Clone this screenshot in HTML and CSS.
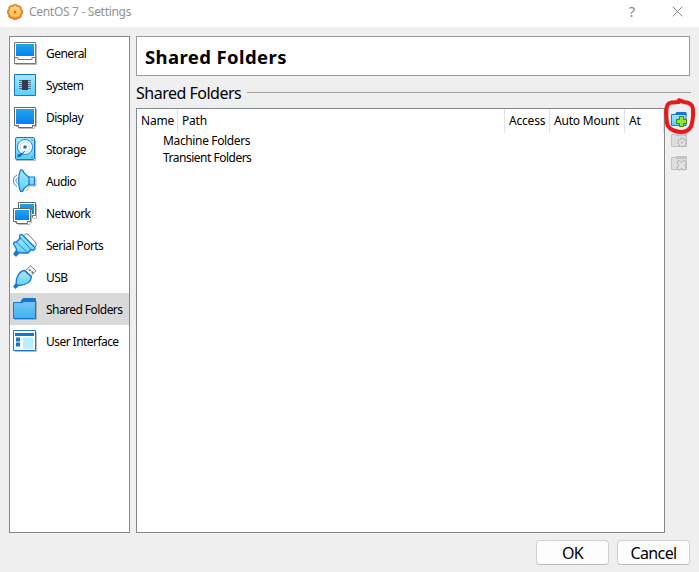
FILE: index.html
```html
<!DOCTYPE html>
<html lang="en">
<head>
<meta charset="utf-8">
<title>CentOS 7 - Settings</title>
<link rel="stylesheet" href="styles.css">
</head>
<body>
<svg class="defs" width="0" height="0" aria-hidden="true">
  <defs>
    <linearGradient id="blue" x1="0" y1="0" x2="0" y2="1"><stop offset="0" stop-color="#22a5e4"/><stop offset="1" stop-color="#0780f6"/></linearGradient>
    <linearGradient id="sky" x1="0" y1="0" x2="0" y2="1"><stop offset="0" stop-color="#a5e8fd"/><stop offset="1" stop-color="#58d0fc"/></linearGradient>
    <linearGradient id="fold" x1="0" y1="0" x2="0" y2="1"><stop offset="0" stop-color="#7cc5f2"/><stop offset="1" stop-color="#37b4f3"/></linearGradient>
    <linearGradient id="gear" x1="0" y1="0" x2="0" y2="1"><stop offset="0" stop-color="#ffdc78"/><stop offset="1" stop-color="#fba02c"/></linearGradient>
  </defs>
</svg>
<div class="window">
  <header class="titlebar">
    <svg class="app-icon" width="16" height="16" viewBox="0 0 16 16"><path d="M6.500.800h3l.8 1.500 1.900-.4 1.900 1.900-.3 1.900 1.400.8v3l-1.400.8.300 1.900-1.900 1.900-1.900-.4-.8 1.500h-3l-.8-1.500-1.900.4-1.900-1.900.3-1.900L.900 9.500v-3l1.400-.8-.3-1.900 1.900-1.900 1.900.4z" fill="url(#gear)" stroke="#dc6a24" stroke-width="1.300" stroke-linejoin="round"/><circle cx="8" cy="8" r="4" fill="none" stroke="#ffdf8c" stroke-width="1.200"/><circle cx="8" cy="8" r="1.300" fill="#df6b1e"/></svg>
    <span class="title">CentOS 7 - Settings</span>
    <span class="help">?</span>
    <svg class="close" width="11" height="11" viewBox="0 0 11 11"><path d="M.7.7l9.600 9.600M10.300.7L.7 10.300" stroke="#858585" stroke-width="1"/></svg>
  </header>
  <div class="body">
    <nav class="sidebar">
      <div class="item"><svg viewBox="0 0 24 24"><path d="M2.500 23.500h21V3" fill="none" stroke="#b9b9b9"/><path d="M1.500 1.500h21v21h-21z" fill="#fff" stroke="#777"/><path d="M3 3h18v12H3z" fill="url(#blue)"/><path d="M2 16.500h3v2h14v-2h3" fill="none" stroke="#777"/></svg><span>General</span></div>
      <div class="item"><svg viewBox="0 0 24 24"><path d="M1.500 1.500h21v21h-21z" fill="url(#sky)" stroke="#1874cf"/><path d="M6 7.500h12M6 9.500h12M6 11.500h12M6 13.500h12M6 15.500h12" stroke="#477391"/><path d="M9 7h6v10H9z" fill="#383a45"/></svg><span>System</span></div>
      <div class="item"><svg viewBox="0 0 24 24"><path d="M3 21.500h3v2h15v-2h2.500V4" fill="none" stroke="#b9b9b9"/><path d="M1.500 2.500h21v18h-3v2h-14v-2h-4z" fill="#fff" stroke="#666"/><path d="M3 4h18v15H3z" fill="url(#blue)"/></svg><span>Display</span></div>
      <div class="item"><svg viewBox="0 0 24 24"><path d="M3 23.500h19.500V3" fill="none" stroke="#b9b9b9"/><rect x="2.500" y=".5" width="19" height="22" rx="1.500" fill="url(#sky)" stroke="#1874cf"/><circle cx="12" cy="10" r="7.500" fill="#fff" stroke="#2488df"/><circle cx="12" cy="10" r="5" fill="none" stroke="#b8def5"/><circle cx="12" cy="10" r="1.800" fill="#176fc5"/><path d="M13 13l-5 6.500-3.500 1-.2-3L9 16z" fill="#176fc5"/><circle cx="19" cy="3" r=".7" fill="#176fc5"/><circle cx="19" cy="20" r=".7" fill="#176fc5"/></svg><span>Storage</span></div>
      <div class="item"><svg viewBox="0 0 24 24"><path d="M13.500 22l3-5h6.500V9" fill="none" stroke="#b9b9b9"/><path d="M15.500 8h6v8h-6z" fill="url(#sky)" stroke="#1874cf" stroke-width="1.200"/><path d="M7.500 1C9.500.5 10.500 2 11 4l5 4.500v7L11 19.500c-.5 2-1.500 3.500-3.500 3C5 17 5 6.500 7.500 1z" fill="url(#sky)" stroke="#1874cf" stroke-width="1.200"/><path d="M4 6C-.800 8.500-.800 15 4 17.500M4.500 9c-2 1.500-2 4 0 5.500" fill="none" stroke="#2886d8" stroke-width="1"/></svg><span>Audio</span></div>
      <div class="item"><svg viewBox="0 0 24 24"><path d="M20 17.500h3.500V3" fill="none" stroke="#b9b9b9"/><path d="M5.500 1.500h17v13h-3v2h-11v-2h-3z" fill="#fff" stroke="#666"/><path d="M7 3h14v10H7z" fill="url(#blue)"/><path d="M2 21.500h3v2h12v-2h1.500V9" fill="none" stroke="#b9b9b9"/><path d="M.500 7.500h17v13h-3v2h-11v-2h-3z" fill="#fff" stroke="#666"/><path d="M2 9h14v10H2z" fill="url(#blue)"/></svg><span>Network</span></div>
      <div class="item"><svg viewBox="0 0 24 24"><path d="M10 3.500l2.500-2.500H15l8 9v3l-2 2z" fill="#fff" stroke="#777"/><path d="M7 2c1.500-1 3-.5 3.500 1L21 13.500c1.500 1 1.500 2.500 0 3.500-1 .5-2 .3-3-.5l-3 3.500H9l-2.500-.5L3 23l-2-2 2.500-3.500L3 15 .800 11.500c-.5-2 .7-3 2.500-2.500L7.500 5C6.500 4 6.300 3 7 2z" fill="url(#sky)" stroke="#1874cf" stroke-width="1.300" stroke-linejoin="round"/><path d="M7.500 5L18 16.500M3.300 9L15 20" fill="none" stroke="#1f80d6"/><path d="M5 18.500L2 21.500" stroke="#1874cf" stroke-width="2.200"/></svg><span>Serial Ports</span></div>
      <div class="item"><svg viewBox="0 0 24 24"><path d="M12.500 5.500L17.500.800l5.500 5-5 5z" fill="#fff" stroke="#777"/><path d="M16 4.500L17.500 6M18.500 6.500L20 8" stroke="#555" stroke-width="1.500"/><path d="M11.500 5.500l7 6.500c-.5 5-5.500 8-13 8.500l-3 2.500L1 21.500 3 19C3 11.500 6.500 6 11.500 5.500z" fill="url(#sky)" stroke="#1874cf" stroke-width="1.300"/><path d="M4.500 19L2 21.500" stroke="#1874cf" stroke-width="2"/></svg><span>USB</span></div>
      <div class="item selected"><svg viewBox="0 0 24 24"><path d="M1.500 22.500h22V4" fill="none" stroke="#aaa"/><path d="M8 4.500L10 1.500h12.500V7H8z" fill="#1874d2" stroke="#1874d2"/><path d="M.500 21.500v-16H9l2-1h11.500v17z" fill="url(#fold)" stroke="#1874d2"/></svg><span>Shared Folders</span></div>
      <div class="item"><svg viewBox="0 0 24 24"><path d="M1.500 22.500h22V3" fill="none" stroke="#b9b9b9"/><path d="M.500 1.500h22v20H.500z" fill="#f4fcff" stroke="#2079cd"/><path d="M2 4h19v3H2zM3 8.500h4v4H3zM3 13.500h4v4H3z" fill="#1874d2"/><path d="M10 8.500h10v11H10z" fill="#b8edff"/></svg><span>User Interface</span></div>
    </nav>
    <main class="content">
      <h1 class="page-title"><span>Shared Folders</span></h1>
      <div class="group"><span>Shared Folders</span><i></i></div>
      <div class="row">
        <section class="table">
          <div class="head"><span>Name</span><span>Path</span><span>Access</span><span>Auto Mount</span><span>At</span></div>
          <div class="line machine"><span>Machine Folders</span></div>
          <div class="line transient"><span>Transient Folders</span></div>
        </section>
        <aside class="tools">
          <svg class="tool" viewBox="0 0 16 16"><path d="M4 4l1.500-2.500H15V5H4z" fill="#1874d2" stroke="#1874d2"/><path d="M.500 14.500v-11H5l1-1h9v12z" fill="url(#sky)" stroke="#2379cf"/><path d="M5 2h10v2H5z" fill="#1c73cd"/><path d="M8.500 5.500h4v3h3v4h-3v3h-4v-3h-3v-4h3z" fill="#95e629" stroke="#38861b"/></svg>
          <svg class="tool" viewBox="0 0 16 16"><path d="M.500 13.500v-12H4l1.500-1H15.500v13z" fill="#dedede" stroke="#c2c2c2"/><path d="M5 1h10v2H5z" fill="#c3c3c3"/><circle cx="11" cy="9.500" r="4" fill="#e3e3e3" stroke="#b0b0b0" stroke-width="1.300" stroke-dasharray="2 .7"/><circle cx="11" cy="9.500" r="1.100" fill="#b0b0b0"/></svg>
          <svg class="tool" viewBox="0 0 16 16"><path d="M.500 14.500v-12H4l1.500-1H15.500v13z" fill="#dedede" stroke="#c2c2c2"/><path d="M5 2h10v2H5z" fill="#c3c3c3"/><path d="M6 7l2-1.500 2.500 2 2.500-2L15.500 7l-1.800 3.300 1.800 3-2.500 2-2.500-2-2.500 2-2.200-2 2-3z" fill="#e3e3e3" stroke="#b0b0b0"/></svg>
          <svg class="marker" width="34" height="42" viewBox="0 0 34 42"><path d="M16 6C11 6 6 6 4.500 9 2 14 3.500 22 4 27c.5 5 6 8 12 8.800 5 .6 10.500-1 12.500-6.500 1.500-6 2-13 1.200-18C29 8 25 6.500 21 6L16 4.200" fill="none" stroke="#e8191c" stroke-width="4" stroke-linecap="round" stroke-linejoin="round"/></svg>
        </aside>
      </div>
    </main>
  </div>
  <footer class="footer"><button class="ok"><span>OK</span></button><button class="cancel"><span>Cancel</span></button></footer>
</div>
</body>
</html>
```
FILE: styles.css
```css
* { box-sizing: border-box; }
body { margin: 0; background: #efefef; font: 12px/16px "Noto Sans", sans-serif; color: #000; overflow: hidden; }
.defs { position: absolute; }
.window { width: 699px; height: 572px; display: flex; flex-direction: column; }
.titlebar { height: 27px; background: #fff; display: flex; align-items: center; padding: 0 10px 4px 7px; color: #929292; }
.app-icon { margin-right: 6px; }
.title { font-size: 12px; letter-spacing: -0.3px; flex: 1; white-space: nowrap; }
.help { width: 8px; margin-right: 35px; font-size: 14px; color: #808080; }
.close { margin-right: 6px; }
.body { height: 506px; display: flex; gap: 6px; padding: 9px 8px 0 9px; }
.sidebar { width: 121px; height: 497px; background: #fff; border: 1px solid #828790; }
.item { height: 32px; display: flex; align-items: center; gap: 9px; padding-left: 3px; letter-spacing: -0.55px; white-space: nowrap; }
.item span { padding-top: 2px; }
.item svg { width: 24px; height: 24px; flex: none; }
.selected { background: #d9d9d9; }
.content { flex: 1; display: flex; flex-direction: column; }
.page-title { margin: 0; width: 554px; height: 40px; background: #fff; border: 1px solid #9a9a9f; display: flex; align-items: center; padding: 2px 0 0 8px; font: bold 18.5px/22px "Noto Sans", sans-serif; letter-spacing: 0.4px; }
.group { height: 32px; display: flex; align-items: center; gap: 6px; font-size: 16px; line-height: 20px; letter-spacing: -0.5px; white-space: nowrap; }
.group span { padding-top: 2px; }
.group i { flex: 1; height: 1px; background: #a0a0a0; }
.row { display: flex; }
.table { width: 529px; height: 425px; background: #fff; border: 1px solid #828790; }
.head { display: grid; grid-template-columns: 41px 327px 45px 75px 39px; height: 24px; margin-bottom: -1px; }
.head span { border-right: 1px solid #e3e3e3; padding: 4px 0 0 4px; letter-spacing: -0.2px; white-space: nowrap; }
.line { height: 17px; padding: 1px 0 0 26px; letter-spacing: -0.36px; }
.transient { letter-spacing: -0.5px; }
.tools { position: relative; display: flex; flex-direction: column; gap: 6px; padding: 3px 0 0 6px; }
.tool { width: 16px; height: 16px; }
.marker { position: absolute; left: -2px; top: -12px; }
.footer { display: flex; gap: 8px; justify-content: flex-end; padding: 7px 9px 0 0; }
.footer button { width: 73px; height: 25px; background: #fdfdfd; border: 1px solid #d0d0d0; border-bottom-color: #bcbcbc; border-radius: 4px; padding: 0; font: 16px/20px "Noto Sans", sans-serif; letter-spacing: -0.6px; color: #000; }
```
